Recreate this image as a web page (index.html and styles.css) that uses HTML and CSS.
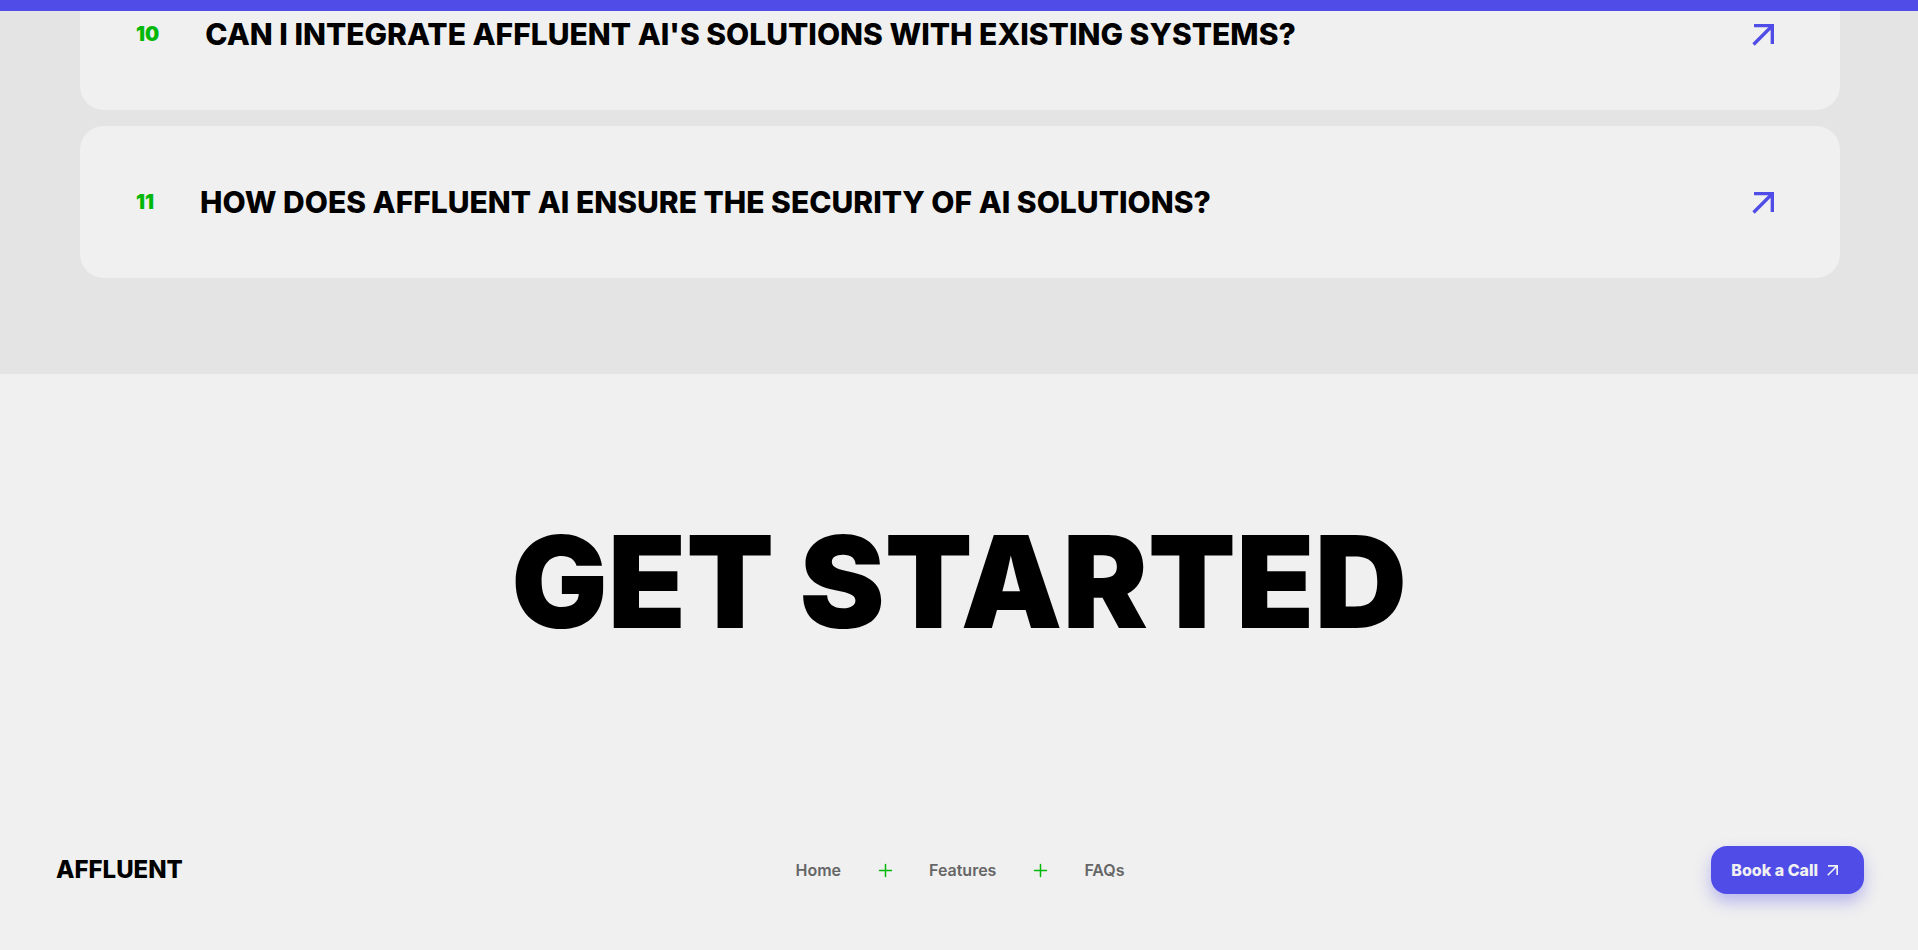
FILE: index.html
```html
<!DOCTYPE html>
<html lang="en">
<head>
<meta charset="utf-8">
<meta name="viewport" content="width=device-width, initial-scale=1">
<title>Affluent</title>
<link rel="stylesheet" href="styles.css">
</head>
<body>
<svg class="sprite" aria-hidden="true">
  <symbol id="arrow" viewBox="0 0 24 24"><path d="M6 6v2h8.59L5 17.59 6.41 19 16 9.41V18h2V6z"/></symbol>
  <symbol id="plus" viewBox="0 0 24 24"><path d="M6.500 12.5h12M12.5 6.500v12"/></symbol>
</svg>
<div class="progress"></div>
<main>
  <section class="faq">
    <button class="faq-item" type="button">
      <span class="faq-number">10</span>
      <span class="faq-question">CAN I INTEGRATE AFFLUENT AI'S SOLUTIONS WITH EXISTING SYSTEMS?</span>
      <svg class="faq-arrow" aria-hidden="true"><use href="#arrow"/></svg>
    </button>
    <button class="faq-item" type="button">
      <span class="faq-number">11</span>
      <span class="faq-question">HOW DOES AFFLUENT AI ENSURE THE SECURITY OF AI SOLUTIONS?</span>
      <svg class="faq-arrow" aria-hidden="true"><use href="#arrow"/></svg>
    </button>
  </section>
  <section class="cta">
    <h1 class="cta-title">GET STARTED</h1>
  </section>
</main>
<footer class="footer">
  <a class="logo" href="#">AFFLUENT</a>
  <nav class="nav">
    <a class="nav-link" href="#">Home</a>
    <svg class="nav-plus" aria-hidden="true"><use href="#plus"/></svg>
    <a class="nav-link" href="#">Features</a>
    <svg class="nav-plus" aria-hidden="true"><use href="#plus"/></svg>
    <a class="nav-link" href="#">FAQs</a>
  </nav>
  <div class="footer-end">
    <a class="book" href="#">Book a Call<svg class="book-arrow" aria-hidden="true"><use href="#arrow"/></svg></a>
  </div>
</footer>
</body>
</html>
```
FILE: styles.css
```css
* { box-sizing: border-box; }
body {
  margin: 0;
  height: 100vh;
  overflow: hidden;
  background: #f0f0f0;
  color: #000;
  font-family: Inter, "Liberation Sans", sans-serif;
}
a { color: inherit; text-decoration: none; }
.sprite { display: none; }
.progress {
  position: fixed;
  inset: 0 0 auto;
  height: 11px;
  background: #4f4ce8;
  z-index: 1;
}
/* The list is scrolled so that its first visible card runs under the progress bar. */
main { margin-top: -42px; }
.faq {
  display: flex;
  flex-direction: column;
  gap: 16px;
  padding: 0 78px 96px 80px;
  background: #e4e4e4;
}
.faq-item {
  display: flex;
  align-items: center;
  gap: 46px;
  padding: 56px;
  border: 0;
  border-radius: 24px;
  background: #f0f0f0;
  color: inherit;
  font-family: inherit;
  text-align: left;
}
.faq-number {
  color: #00b807;
  font-size: 20px;
  line-height: 24px;
  font-weight: 900;
}
.faq-question {
  flex: 1;
  font-size: 30px;
  line-height: 40px;
  font-weight: 850;
}
.faq-arrow { width: 40px; height: 40px; fill: #4f4ce8; }
.cta { padding: 144px 0; text-align: center; }
.cta-title {
  margin: 0;
  font-size: 128px;
  line-height: 128px;
  font-weight: 900;
}
.footer {
  display: grid;
  grid-template-columns: 1fr auto 1fr;
  align-items: center;
  padding: 56px 54px 56px 56px;
}
.logo { font-size: 24px; line-height: 32px; font-weight: 800; }
.nav { display: flex; align-items: center; gap: 32px; }
.nav-link { color: #666; font-size: 16px; line-height: 24px; font-weight: 600; }
.nav-plus { width: 24px; height: 24px; fill: none; stroke: #00b807; stroke-width: 1.5; stroke-linecap: round; }
.footer-end { display: flex; justify-content: flex-end; }
.book {
  display: flex;
  align-items: center;
  gap: 5px;
  padding: 12px 21px 12px 20px;
  border-radius: 16px;
  background: #4f4ce8;
  color: #f0f0f0;
  font-size: 16px;
  line-height: 24px;
  font-weight: 800;
  box-shadow: 0 8px 16px rgba(79, 76, 232, .35);
}
.book-arrow { width: 20px; height: 20px; fill: currentColor; }
```
